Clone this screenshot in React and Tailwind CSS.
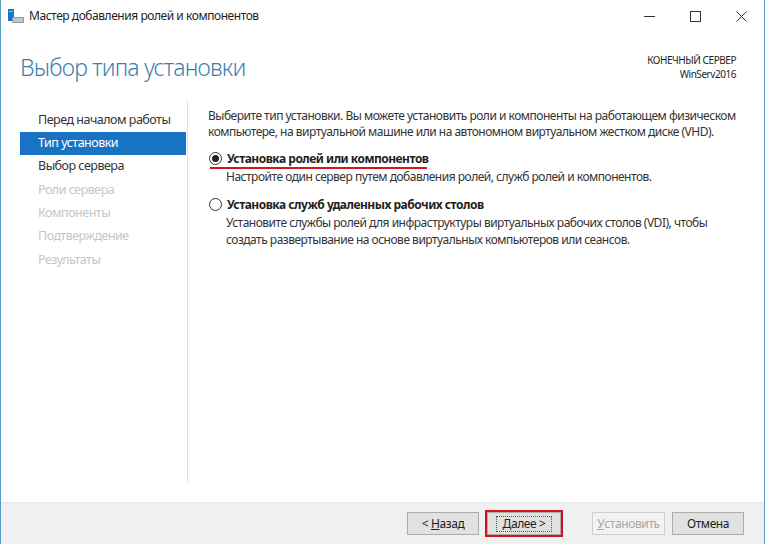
import React from 'react';

const FONT = { fontFamily: '"Noto Sans", "Open Sans", sans-serif' };

// шаги мастера слева
const steps = [
  { label: 'Перед началом работы', state: 'done' },
  { label: 'Тип установки', state: 'active' },
  { label: 'Выбор сервера', state: 'done' },
  { label: 'Роли сервера', state: 'off' },
  { label: 'Компоненты', state: 'off' },
  { label: 'Подтверждение', state: 'off' },
  { label: 'Результаты', state: 'off' },
];

function AppIcon() {
  return (
    <svg width="18" height="16" viewBox="0 0 18 16">
      <rect x="1" y="0" width="6" height="12" fill="#1a74c4" />
      <rect x="2" y="2" width="4" height="1" fill="#8fc0ea" />
      <rect x="5" y="8" width="12" height="6" rx="1" fill="#8a9aa6" />
      <rect x="6" y="9" width="10" height="4" fill="#b9c6cf" />
    </svg>
  );
}

function Radio({ checked }) {
  return (
    <span className="flex h-[13px] w-[13px] shrink-0 items-center justify-center rounded-full border border-[#333] bg-white">
      {checked && <span className="h-[7px] w-[7px] rounded-full bg-[#222]" />}
    </span>
  );
}

function Btn({ children, className = '', disabled }) {
  return (
    <div
      className={`flex h-[23px] items-center justify-center border text-[12px] tracking-[-0.4px] ${
        disabled ? 'border-[#cfcfcf] bg-[#f2f2f2] text-[#a6a6a6]' : 'border-[#adadad] bg-[#e1e1e1] text-[#1e1e1e]'
      } ${className}`}
    >
      {children}
    </div>
  );
}

export default function App() {
  return (
    <div
      className="flex h-[544px] w-[765px] flex-col overflow-hidden border-x border-[#5b9fc9] bg-white text-[#1e1e1e]"
      style={FONT}
    >
      {/* Заголовок окна */}
      <div className="flex h-[32px] shrink-0 items-center">
        <div className="ml-[6px] mr-[4px] mt-[1px]">
          <AppIcon />
        </div>
        <span className="text-[12px] tracking-[-0.45px] text-[#1e1e1e]">Мастер добавления ролей и компонентов</span>
        <div className="ml-auto flex h-full items-center text-[#333]">
          <div className="flex h-full w-[46px] items-center justify-center">
            <div className="h-px w-[11px] bg-[#333]" />
          </div>
          <div className="flex h-full w-[46px] items-center justify-center">
            <div className="h-[11px] w-[11px] border border-[#333]" />
          </div>
          <div className="flex h-full w-[46px] items-center justify-center">
            <svg width="11" height="11" viewBox="0 0 11 11">
              <path d="M0.5 0.5 L10.5 10.5 M10.5 0.5 L0.5 10.5" stroke="#333" strokeWidth="1" />
            </svg>
          </div>
        </div>
      </div>

      {/* Шапка страницы */}
      <div className="flex h-[68px] shrink-0 items-start justify-between pl-[19px] pr-[28px]">
        <h1 className="mt-[20px] text-[23px] font-light leading-[30px] tracking-[-0.8px] text-[#3d7fab]">
          Выбор типа установки
        </h1>
        <div className="mt-[21px] text-right text-[10px] leading-[14px] tracking-[-0.45px] text-[#1e1e1e]">
          <div>КОНЕЧНЫЙ СЕРВЕР</div>
          <div>WinServ2016</div>
        </div>
      </div>

      {/* Основная часть */}
      <div className="flex min-h-0 flex-1 pb-[19px]">
        <div className="w-[187px] shrink-0 border-r border-[#e3e3e3] pl-[19px] pr-px pt-[8.5px]">
          {steps.map((s) => (
            <div
              key={s.label}
              className={`flex h-[23.33px] items-center pl-[18px] text-[12.5px] tracking-[-0.5px] ${
                s.state === 'active'
                  ? 'bg-[#1a73c2] text-white'
                  : s.state === 'done'
                  ? 'text-[#333]'
                  : 'text-[#c6c6c6]'
              }`}
            >
              {s.label}
            </div>
          ))}
        </div>

        <div className="flex-1 pl-[20px] pt-[8px] text-[12px] leading-[15.5px] tracking-[-0.5px] text-[#333]">
          <p className="whitespace-nowrap">
            Выберите тип установки. Вы можете установить роли и компоненты на работающем физическом
            <br />
            компьютере, на виртуальной машине или на автономном виртуальном жестком диске (VHD).
          </p>

          <div className="mt-[12px] flex items-center gap-[5px] pl-[1px]">
            <Radio checked />
            <span className="font-bold text-[#1e1e1e]">Установка ролей или компонентов</span>
          </div>
          <div className="ml-[2px] h-[2px] w-[217px] bg-[#d7141a]" />
          <p className="whitespace-nowrap pl-[18px] leading-[16px]">
            Настройте один сервер путем добавления ролей, служб ролей и компонентов.
          </p>

          <div className="mt-[12px] flex items-center gap-[5px] pl-[1px]">
            <Radio />
            <span className="font-bold text-[#1e1e1e]">Установка служб удаленных рабочих столов</span>
          </div>
          <p className="mt-[1.5px] whitespace-nowrap pl-[18px] leading-[17px]">
            Установите службы ролей для инфраструктуры виртуальных рабочих столов (VDI), чтобы
            <br />
            создать развертывание на основе виртуальных компьютеров или сеансов.
          </p>
        </div>
      </div>

      {/* Кнопки */}
      <div className="flex h-[42px] shrink-0 items-center justify-end border-t border-[#e6e6e6] bg-[#f0f0f0] pr-[20px]">
        <Btn className="w-[72px]">
          &lt;&nbsp;<u>Н</u>азад
        </Btn>
        <div className="ml-[6px] border-2 border-[#d0141c]">
          <Btn className="w-[74px] border-[#adadad]">
            <span className="border border-dotted border-[#555] px-[6px] leading-[14px]">
              <u>Д</u>алее &gt;
            </span>
          </Btn>
        </div>
        <Btn disabled className="ml-[29px] w-[73px]">
          <u>У</u>становить
        </Btn>
        <Btn className="ml-[7px] w-[72px]">Отмена</Btn>
      </div>
    </div>
  );
}
